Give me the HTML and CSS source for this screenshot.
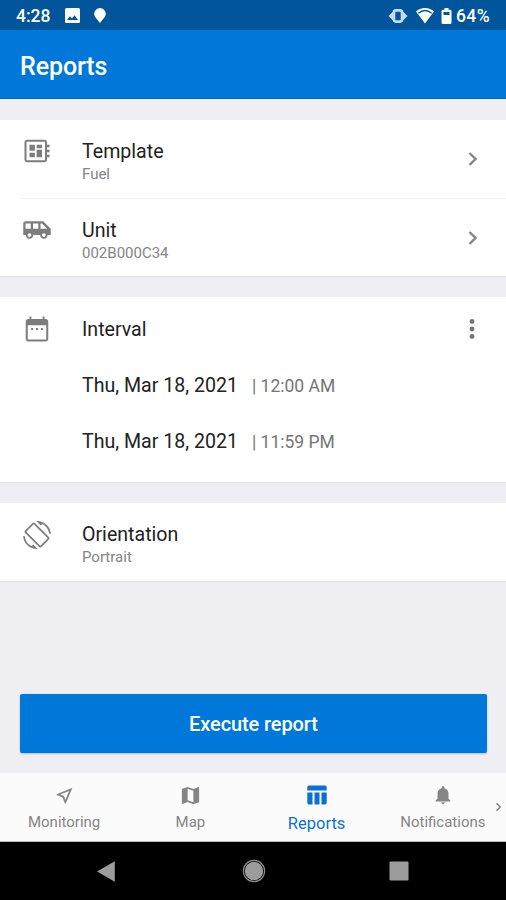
FILE: index.html
```html
<!DOCTYPE html>
<html lang="en">
<head>
<meta charset="utf-8">
<title>Reports</title>
<link rel="stylesheet" href="styles.css">
</head>
<body>
<div class="screen">
  <header class="status">
    <span class="clock">4:28</span>
    <svg class="st-image" width="15" height="15" viewBox="0 0 15 15"><path fill="#fff" fill-rule="evenodd" d="M1.500 0h12A1.500 1.500 0 0 1 15 1.500v12a1.500 1.500 0 0 1-1.500 1.500h-12A1.500 1.500 0 0 1 0 13.500v-12A1.500 1.500 0 0 1 1.500 0zM2 12h11L9.500 7.300 7 10.500 5 8.300z"/></svg>
    <svg class="st-pin" width="12" height="15" viewBox="0 0 12 15"><path fill="#fff" d="M6 0a5.800 5.800 0 0 1 5.800 5.800C11.800 9 8.500 11.500 6 15 3.500 11.500.2 9 .2 5.800A5.800 5.800 0 0 1 6 0z"/></svg>
    <span class="fill"></span>
    <svg class="st-vibrate" width="20" height="14" viewBox="0 0 20 14"><path fill="#c5dbee" d="M5 2.500v9L0.500 7zM15 2.500v9l4.500-4.500z"/><rect x="6" y="1.400" width="8" height="11.200" rx="2" fill="none" stroke="#c5dbee" stroke-width="2.600"/></svg>
    <svg class="st-wifi" width="18" height="16" viewBox="0 0 18 16"><path fill="#fff" d="M9 0c3.500 0 6.600 1.300 9 3.600L9 15.600 0 3.600C2.400 1.300 5.500 0 9 0z"/><path fill="none" stroke="#00559b" stroke-width="1.300" d="M2.300 5.200Q9 -.2 15.700 5.200"/></svg>
    <svg class="st-battery" width="11" height="16" viewBox="0 0 11 16"><path fill="#fff" fill-rule="evenodd" d="M3.500 0h4v1.700H9A1.500 1.500 0 0 1 10.500 3.200v11.300A1.500 1.500 0 0 1 9 16H2a1.500 1.500 0 0 1-1.500-1.500V3.200A1.500 1.500 0 0 1 2 1.700h1.500zM2.500 4v3h6V4z"/></svg>
    <span class="percent">64%</span>
  </header>
  <div class="appbar"><h1>Reports</h1></div>

  <main class="content">
    <section class="card">
      <div class="row">
        <svg class="icon" viewBox="0 0 24 24"><path d="M22 9V7h-2V5c0-1.100-.9-2-2-2H4c-1.100 0-2 .9-2 2v14c0 1.100.9 2 2 2h14c1.100 0 2-.9 2-2v-2h2v-2h-2v-2h2v-2h-2V9h2zm-3.600 10.400H3.600V4.600h14.800v14.800zM6 13.300h4.300V17H6zM11.700 7H16v2.700h-4.300zM6 7h4.300v4.700H6zm5.700 4H16v6h-4.300z"/></svg>
        <div class="label"><div class="title">Template</div><div class="sub">Fuel</div></div>
        <svg class="chev" width="10" height="16" viewBox="0 0 10 16"><path d="M1.500 2l6 6-6 6"/></svg>
      </div>
      <div class="divider"></div>
      <div class="row">
        <svg class="icon" viewBox="0 0 24 24"><path d="M17 5H3c-1.100 0-2 .89-2 2v9h2c0 1.650 1.340 3 3 3s3-1.350 3-3h5.500c0 1.650 1.340 3 3 3s3-1.350 3-3H23v-5l-6-6zM2.800 11V6.800H7V11H2.800zM6 17.500c-.83 0-1.500-.67-1.500-1.500s.67-1.500 1.500-1.500 1.500.67 1.500 1.500-.67 1.500-1.500 1.500zM13 11H8.800V6.800H13V11zm4.500 6.500c-.83 0-1.500-.67-1.500-1.500s.67-1.500 1.500-1.500 1.500.67 1.500 1.500-.67 1.500-1.500 1.500zM14.800 11V6.800H16l4.200 4.200h-5.400z"/></svg>
        <div class="label"><div class="title">Unit</div><div class="sub">002B000C34</div></div>
        <svg class="chev" width="10" height="16" viewBox="0 0 10 16"><path d="M1.500 2l6 6-6 6"/></svg>
      </div>
    </section>

    <section class="card interval">
      <div class="row head">
        <svg class="icon" viewBox="0 0 24 24"><path d="M8.800 11.200H7.300v1.500h1.500zm3.950 0h-1.500v1.500h1.500zm3.950 0h-1.500v1.500h1.500zM19 4h-1V2h-1.500v2h-9V2H6v2H5c-1.110 0-2 .9-2 2v14c0 1.100.89 2 2 2h14c1.100 0 2-.9 2-2V6c0-1.100-.9-2-2-2zm.4 16.400H4.600V9h14.800v11.400z"/></svg>
        <div class="label"><div class="title">Interval</div></div>
        <svg class="dots" width="6" height="22" viewBox="0 0 6 22"><circle cx="3" cy="3.500" r="2.400"/><circle cx="3" cy="11" r="2.400"/><circle cx="3" cy="18.500" r="2.400"/></svg>
      </div>
      <div class="time"><span class="date">Thu, Mar 18, 2021</span><span class="hour">| 12:00 AM</span></div>
      <div class="time"><span class="date">Thu, Mar 18, 2021</span><span class="hour">| 11:59 PM</span></div>
    </section>

    <section class="card">
      <div class="row">
        <svg class="icon rotate" viewBox="0 0 24 24"><path d="M16.480 2.520c3.270 1.550 5.610 4.720 5.970 8.480h1.500C23.440 4.840 18.290 0 12 0l-.66.03 3.810 3.810 1.330-1.320zm-6.250-.77c-.59-.59-1.540-.59-2.120 0L1.750 8.110c-.59.59-.59 1.540 0 2.120l12.020 12.020c.59.59 1.540.59 2.120 0l6.360-6.360c.59-.59.59-1.540 0-2.120L10.230 1.750zm4.600 19.440L2.810 9.170l6.360-6.360 12.020 12.020-6.360 6.360zm-7.310.29C4.250 19.940 1.910 16.760 1.550 13H.05C.56 19.160 5.710 24 12 24l.66-.03-3.810-3.810-1.330 1.320z"/></svg>
        <div class="label"><div class="title">Orientation</div><div class="sub">Portrait</div></div>
      </div>
    </section>

    <button class="execute">Execute report</button>
  </main>

  <nav class="tabs">
    <div class="tab"><svg width="21" height="21" viewBox="0 0 24 24"><path d="M17.270 6.730l-4.240 10.130-1.320-3.420-.32-.83-.82-.32-3.430-1.330 10.130-4.230M21 3L3 10.530v.98l6.840 2.650L12.480 21h.98L21 3z"/></svg><span>Monitoring</span></div>
    <div class="tab"><svg width="23" height="23" viewBox="0 0 24 24"><path d="M20.500 3l-.16.03L15 5.100 9 3 3.360 4.900c-.21.07-.36.25-.36.48V20.500c0 .28.22.5.5.5l.16-.03L9 18.900l6 2.100 5.640-1.900c.21-.07.36-.25.36-.48V3.500c0-.28-.22-.5-.5-.5zM15 19l-6-2.110V5l6 2.110V19z"/></svg><span>Map</span></div>
    <div class="tab active"><svg width="20" height="20" viewBox="0 0 20 20"><path d="M2 .5h16a1.700 1.700 0 0 1 1.700 1.700V5.600H.3V2.200A1.700 1.700 0 0 1 2 .5zM.3 7.500h5.200v12H2A1.700 1.700 0 0 1 .3 17.800zM7.500 7.500h5v12h-5zM14.500 7.500h5.200v10.300a1.700 1.700 0 0 1-1.700 1.700h-3.500z"/></svg><span>Reports</span></div>
    <div class="tab"><svg width="22" height="22" viewBox="0 0 24 24"><path d="M12 22c1.100 0 2-.9 2-2h-4c0 1.100.89 2 2 2zm6-6v-5c0-3.070-1.640-5.640-4.500-6.320V4c0-.83-.67-1.500-1.500-1.500s-1.500.67-1.500 1.500v.68C7.630 5.360 6 7.920 6 11v5l-2 2v1h16v-1l-2-2z"/></svg><span>Notifications</span></div>
    <svg class="more" width="7" height="10" viewBox="0 0 7 10"><path d="M1.500 1.300L5.200 5 1.500 8.700"/></svg>
  </nav>

  <footer class="system">
    <svg width="18" height="21" viewBox="0 0 18 21"><path fill="#9c9c9c" d="M17.800.3v20.400L0 10.500z"/></svg>
    <svg class="home" width="24" height="24" viewBox="0 0 24 24"><circle cx="12" cy="12" r="10.600" fill="none" stroke="#8c8c8c" stroke-width="1.200"/><circle cx="12" cy="12" r="9.200" fill="#9c9c9c"/></svg>
    <svg width="20" height="20" viewBox="0 0 20 20"><rect x=".5" y=".5" width="19" height="19" rx="1" fill="#9c9c9c"/></svg>
  </footer>
</div>
</body>
</html>
```
FILE: styles.css
```css
* { box-sizing: border-box; }
body { margin: 0; font-family: Roboto, "Liberation Sans", sans-serif; }
svg { display: block; flex: none; }
.screen { width: 506px; height: 900px; display: flex; flex-direction: column; background: #eeeef3; overflow: hidden; }

.status { height: 30px; flex: none; display: flex; align-items: center; background: #00559b; color: #fff; padding: 1px 14px 0 16px; font-weight: 500; font-size: 17.500px; line-height: 28px; }
.clock { width: 49px; }
.st-pin { margin-left: 14px; }
.fill { flex: 1; }
.st-wifi { margin-left: 8px; }
.st-battery { margin-left: 7px; }
.percent { width: 36px; margin-left: 4px; letter-spacing: .4px; }

.appbar { height: 69px; flex: none; display: flex; align-items: center; background: #0078d9; border-bottom: 1px solid #0067bd; padding: 5px 20px 0; }
h1 { margin: 0; color: #fff; font-size: 25px; font-weight: 500; line-height: 31px; letter-spacing: -.1px; }

.content { flex: 1; display: flex; flex-direction: column; gap: 21px; padding-top: 21px; }
.card { background: #fff; box-shadow: 0 1px 1px #e3e3e7; }
.row { height: 78px; display: flex; align-items: flex-start; padding: 16px 28px 0 22px; }
.icon { width: 30px; height: 30px; fill: #7d7d7d; }
.rotate { width: 28px; height: 28px; margin: 2px 1px 0; }
.label { flex: 1; margin-left: 30px; padding-top: 1px; }
.title { font-size: 19.600px; line-height: 30px; color: #222; white-space: nowrap; }
.sub { font-size: 15px; line-height: 14px; color: #858585; }
.chev { margin-top: 15px; }
.chev path, .more path { fill: none; stroke: #858585; stroke-width: 2.400; }
.divider { height: 1px; margin-left: 20px; background: #f3f3f5; }
.card .divider + .row { height: 77px; }
.interval { height: 185px; }
.interval .row { height: 60px; padding-top: 17px; padding-right: 31px; }
.dots { margin-top: 4px; fill: #757575; }
.time { height: 56px; padding-left: 82px; display: flex; align-items: center; line-height: 24px; }
.date { width: 170px; font-size: 19.600px; color: #222; padding-top: 2px; }
.hour { font-size: 17.500px; color: #757575; padding-top: 2px; }

.execute { height: 59px; margin: auto 19px 20px 20px; border: 0; border-radius: 2px; background: #0078d9; box-shadow: 0 1px 2px #b5bdc8; color: #fff; font: 500 20px Roboto, "Liberation Sans", sans-serif; letter-spacing: -.1px; padding: 1px 0 0; }

.tabs { height: 69px; flex: none; position: relative; display: flex; background: #fbfbfb; border-bottom: 1px solid #b8b8b8; padding-left: 1px; }
.tab { flex: 1; display: grid; grid-template-rows: 44px 10px; justify-items: center; align-items: center; fill: #858585; color: #858585; font-size: 15px; line-height: 20px; }
.active { fill: #0b71d0; color: #0b71d0; font-size: 16.500px; grid-template-rows: 43px 15px; align-content: start; }
.more { position: absolute; right: 4px; top: 29px; }
.more path { stroke-width: 1.500; }

.system { height: 58px; flex: none; display: flex; align-items: center; justify-content: space-between; padding: 0 97px; background: #000; }
.home { margin-left: 4px; }
```
